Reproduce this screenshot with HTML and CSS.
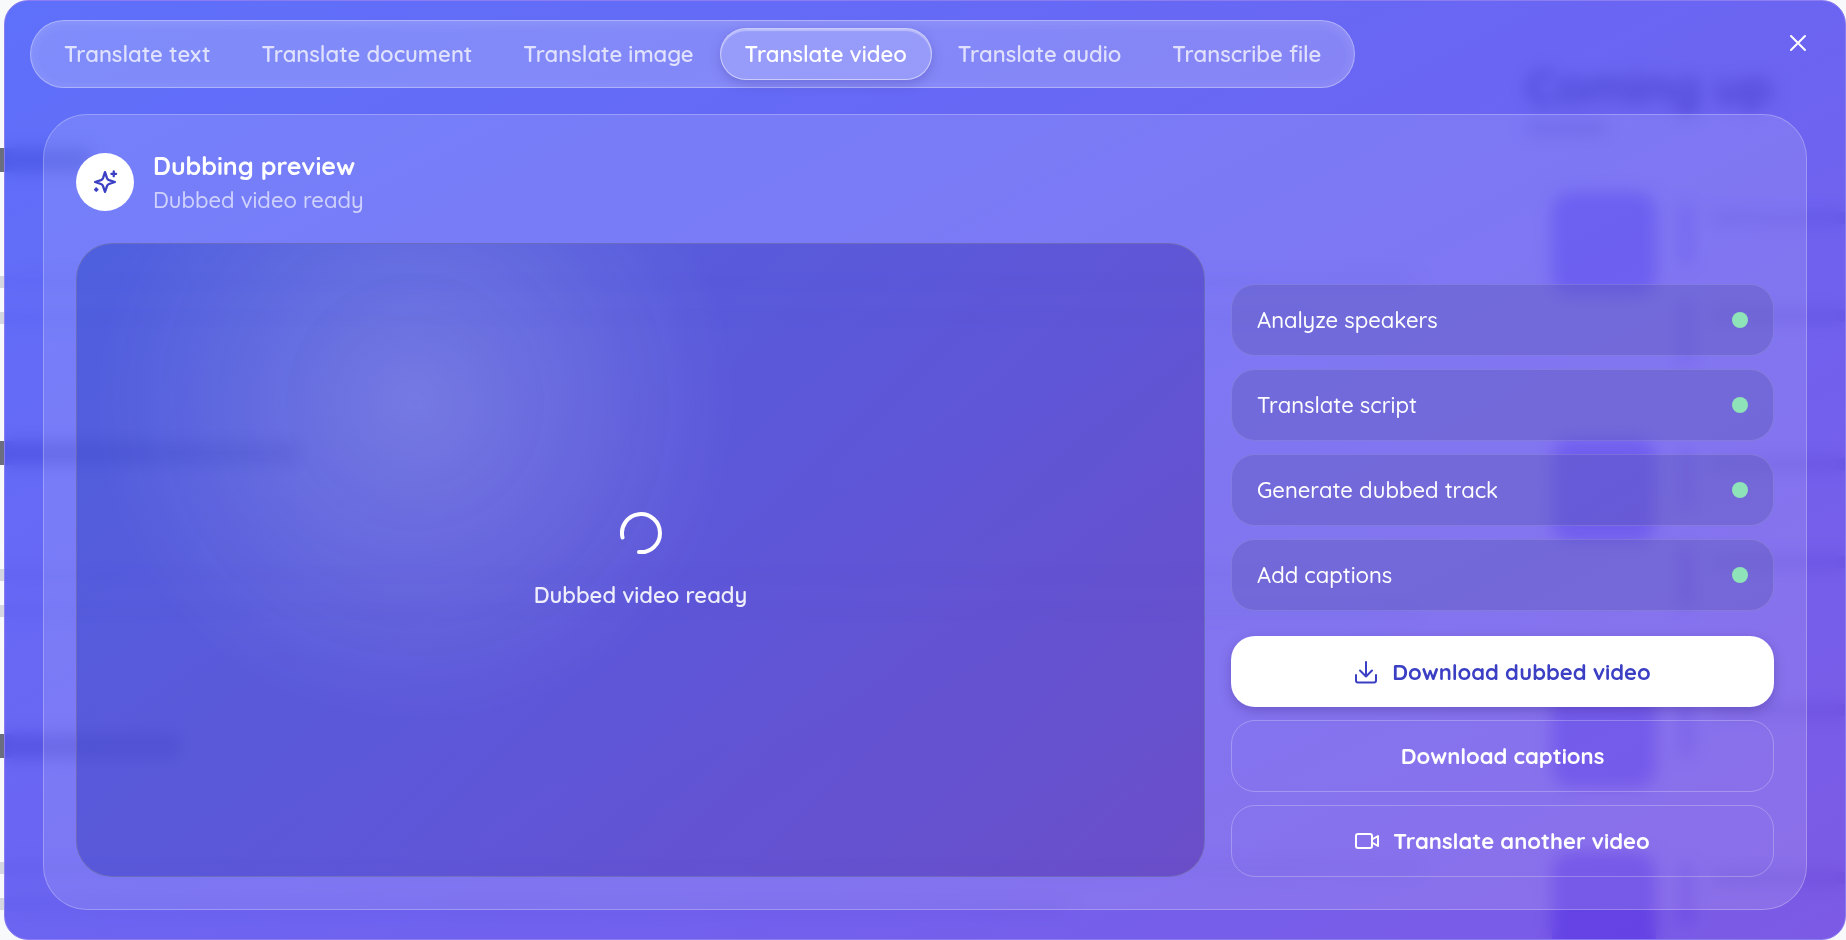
FILE: index.html
```html
<!DOCTYPE html>
<html lang="en">
<head>
  <meta charset="UTF-8" />
  <meta name="viewport" content="width=device-width, initial-scale=1.0"/>
  <title>Translate video</title>
  <link rel="stylesheet" href="styles.css">
</head>
<body>

  <!-- Dashboard behind the dialog -->
  <div class="page" aria-hidden="true">
    <div class="feed">
      <div class="post"><b class="line title"></b><span class="line wide"></span><span class="line"></span></div>
      <div class="post"><b class="line title long"></b><span class="line"></span><span class="line wide"></span></div>
      <div class="post"><b class="line title medium"></b><span class="line wide"></span><span class="line short"></span></div>
    </div>
    <aside class="upcoming">
      <h2>Coming up</h2>
      <span class="line sub"></span>
      <div class="event">
        <i class="date"></i>
        <div class="slots"><i class="slot"></i><i class="slot"></i></div>
      </div>
      <div class="event">
        <i class="date"></i>
        <div class="slots"><i class="slot"></i><i class="slot"></i></div>
      </div>
      <div class="event single">
        <i class="date"></i>
        <div class="slots"><i class="slot"></i></div>
      </div>
      <div class="event">
        <i class="date"></i>
        <div class="slots"><i class="slot"></i></div>
      </div>
    </aside>
  </div>

  <div class="dialog" role="dialog" aria-label="Translate video">
    <header class="dialog-header">
      <nav class="tabs">
        <button>Translate text</button>
        <button>Translate document</button>
        <button>Translate image</button>
        <button class="active">Translate video</button>
        <button>Translate audio</button>
        <button>Transcribe file</button>
      </nav>
      <button class="close" aria-label="Close">
        <svg viewBox="0 0 24 24"><path d="M5 5l14 14M19 5L5 19"/></svg>
      </button>
    </header>

    <main class="panel">
      <div class="panel-title">
        <span class="badge">
          <svg viewBox="0 0 24 24"><path d="M12 3.500l1.700 5.100a3 3 0 0 0 1.800 1.800l5 1.600-5 1.700a3 3 0 0 0-1.800 1.800L12 20.500l-1.700-5a3 3 0 0 0-1.800-1.800L3.500 12l5-1.600a3 3 0 0 0 1.800-1.800z"/><path d="M19.500 3v4M17.500 5h4M4.500 17.500v2M3.500 18.500h2"/></svg>
        </span>
        <div>
          <h1>Dubbing preview</h1>
          <p>Dubbed video ready</p>
        </div>
      </div>

      <div class="columns">
        <section class="preview">
          <svg class="spinner" viewBox="0 0 44 44"><path d="M3.500 26.500A19 19 0 1 1 20 41"/></svg>
          <p>Dubbed video ready</p>
        </section>

        <section class="side">
          <ul class="steps">
            <li>Analyze speakers <span class="dot"></span></li>
            <li>Translate script <span class="dot"></span></li>
            <li>Generate dubbed track <span class="dot"></span></li>
            <li>Add captions <span class="dot"></span></li>
          </ul>
          <div class="actions">
            <button class="primary">
              <svg viewBox="0 0 24 24"><path d="M12 2v14M6 10.500l6 6 6-6M2 15v5.500a2 2 0 0 0 2 2h16a2 2 0 0 0 2-2V15"/></svg>
              Download dubbed video
            </button>
            <button>Download captions</button>
            <button>
              <svg viewBox="0 0 24 24"><rect x="1" y="5" width="16" height="14" rx="2"/><path d="M17 10.500l6-3.500v10l-6-3.500"/></svg>
              Translate another video
            </button>
          </div>
        </section>
      </div>
    </main>
  </div>
</body>
</html>
```
FILE: styles.css
```css
* {
  box-sizing: border-box;
}

body {
  margin: 0;
  height: 100vh;
  overflow: hidden;
  font-family: Quicksand, Lato, sans-serif;
  font-size: 22px;
  font-weight: 500;
  background: #f8f9fb;
  color: #fff;
}

h1,
h2,
p,
ul {
  margin: 0;
  padding: 0;
}

button {
  font: inherit;
  color: inherit;
  background: none;
  border: none;
  cursor: pointer;
}

svg {
  fill: none;
  stroke: currentColor;
  stroke-width: 2;
  stroke-linecap: round;
  stroke-linejoin: round;
}

/* Dashboard behind the dialog */
.page {
  display: grid;
  grid-template-columns: 1fr 320px;
  height: 100vh;
  overflow: hidden;
  color: #000;
}

.feed {
  padding-top: 148px;
}

.post {
  display: flex;
  flex-direction: column;
  gap: 24px;
  height: 293px;
}

.line {
  width: 86%;
  height: 12px;
  background: #d4d6e0;
}

.line.wide {
  width: 93%;
}

.line.short {
  width: 70%;
}

.line.title {
  width: 90px;
  height: 24px;
  margin-bottom: 80px;
  background: #6a6e7e;
}

.line.title.medium {
  width: 180px;
}

.line.title.long {
  width: 300px;
}

.upcoming h2 {
  margin-top: 54px;
  font-size: 48px;
  line-height: 64px;
}

.line.sub {
  display: block;
  width: 80px;
  margin-top: 4px;
  background: #8c8e9c;
}

.event {
  display: flex;
  gap: 24px;
  height: 104px;
  margin: 58px 0 142px 26px;
}

.event.single {
  margin-bottom: 64px;
}

.date {
  width: 104px;
  flex-shrink: 0;
  border-radius: 20px;
  background: #5236ee;
}

.slots {
  flex: 1;
  padding-top: 12px;
}

.slot {
  display: block;
  height: 60px;
  margin-bottom: 38px;
  border-left: 12px solid #8a7de8;
  background: linear-gradient(#a4a6b4, #a4a6b4) 20px 8px / 100% 12px no-repeat;
}

/* Dialog */
.dialog {
  position: fixed;
  inset: 0 0 0 4px;
  display: flex;
  flex-direction: column;
  padding: 19px 35px 29px 25px;
  border: 1px solid #8c7cf2;
  border-radius: 24px;
  background: linear-gradient(to bottom right, rgba(72, 92, 249, 0.88), rgba(87, 79, 240, 0.88) 50%, rgba(106, 67, 225, 0.88));
  backdrop-filter: blur(8px);
}

.dialog-header {
  display: flex;
  justify-content: space-between;
  align-items: flex-start;
}

.tabs {
  display: flex;
  gap: 1px;
  padding: 7px 8px;
  border: 1px solid rgba(255, 255, 255, 0.35);
  border-radius: 34px;
  background: rgba(255, 255, 255, 0.2);
  box-shadow: inset 0 2px 12px rgba(255, 255, 255, 0.12);
}

.tabs button {
  height: 52px;
  padding: 0 24px;
  border: 1px solid transparent;
  border-radius: 26px;
  font-weight: 600;
  color: rgba(255, 255, 255, 0.75);
  white-space: nowrap;
}

.tabs button.active {
  color: #fff;
  border-color: rgba(255, 255, 255, 0.5);
  background: rgba(255, 255, 255, 0.16);
  box-shadow: 0 4px 12px rgba(50, 40, 140, 0.25), inset 0 2px 1px rgba(255, 255, 255, 0.35);
}

.close {
  margin-top: 11px;
  padding: 0;
  height: 24px;
}

.close svg {
  width: 24px;
  height: 24px;
}

.panel {
  flex: 1;
  display: flex;
  flex-direction: column;
  margin: 26px 3px 0 13px;
  padding: 32px;
  border: 1px solid rgba(255, 255, 255, 0.25);
  border-radius: 44px;
  background: rgba(255, 255, 255, 0.12);
}

.panel-title {
  display: flex;
  align-items: center;
  gap: 19px;
  padding: 0 0 26px;
}

.badge {
  display: flex;
  align-items: center;
  justify-content: center;
  width: 58px;
  height: 58px;
  border-radius: 50%;
  background: #fff;
  color: #3b3fc4;
}

.badge svg {
  width: 28px;
  height: 28px;
}

.panel-title h1 {
  padding-top: 2px;
  font-size: 25px;
  line-height: 34px;
  font-weight: 700;
}

.panel-title p {
  line-height: 34px;
  color: rgba(255, 255, 255, 0.65);
}

.columns {
  flex: 1;
  display: grid;
  grid-template-columns: 1129fr 543fr;
  gap: 26px;
}

.preview {
  display: flex;
  flex-direction: column;
  align-items: center;
  justify-content: center;
  gap: 23px;
  padding-top: 2px;
  border: 1px solid rgba(120, 120, 170, 0.6);
  border-radius: 36px;
  background:
    radial-gradient(circle at 30% 25%, rgba(255, 255, 255, 0.18), transparent 320px),
    linear-gradient(135deg, rgba(40, 66, 196, 0.5), rgba(60, 55, 190, 0.5) 50%, rgba(80, 42, 164, 0.5));
}

.preview p {
  line-height: 34px;
  font-weight: 600;
  color: rgba(255, 255, 255, 0.9);
}

.spinner {
  width: 44px;
  height: 44px;
  stroke-width: 4;
}

.side {
  display: flex;
  flex-direction: column;
  justify-content: flex-end;
  gap: 25px;
}

.steps,
.actions {
  display: flex;
  flex-direction: column;
  gap: 13px;
}

.steps li {
  display: flex;
  align-items: center;
  justify-content: space-between;
  height: 72px;
  padding: 0 25px;
  border: 1px solid rgba(255, 255, 255, 0.12);
  border-radius: 24px;
  background: rgba(92, 88, 182, 0.4);
}

.dot {
  width: 16px;
  height: 16px;
  border-radius: 50%;
  background: #8fe3b8;
}

.actions button {
  display: flex;
  align-items: center;
  justify-content: center;
  gap: 14px;
  height: 72px;
  border: 1px solid rgba(255, 255, 255, 0.25);
  border-radius: 24px;
  font-weight: 700;
}

.actions svg {
  width: 24px;
  height: 24px;
}

.actions .primary {
  height: 71px;
  border: none;
  background: #fff;
  color: #3b3fc4;
  box-shadow: 0 4px 12px rgba(50, 30, 120, 0.3);
}
```
